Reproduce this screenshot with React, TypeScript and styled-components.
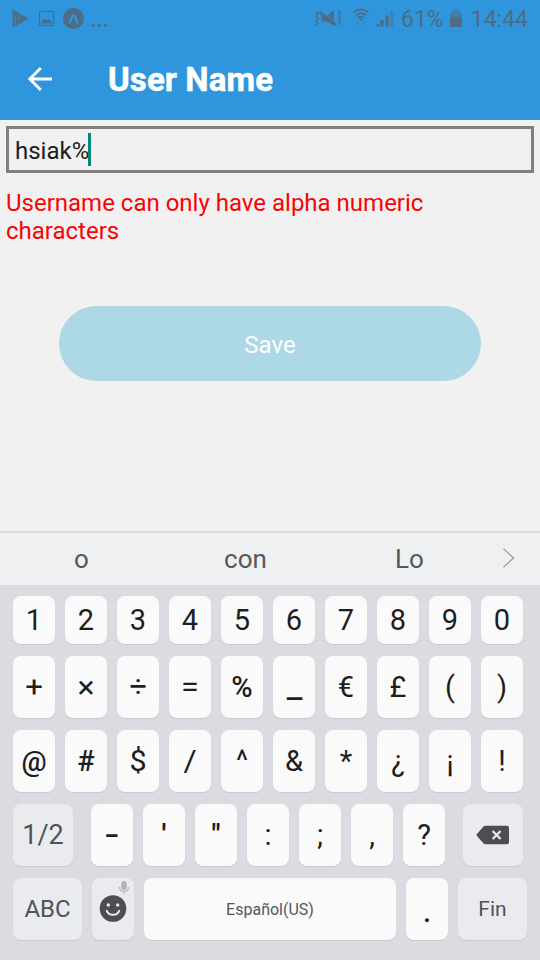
import React from "react";
import styled, { createGlobalStyle } from "styled-components";

const GlobalStyle = createGlobalStyle`
  * { box-sizing: border-box; }
  body { margin: 0; background: #f1f1f1; font-family: Roboto, sans-serif; }
`;

const Screen = styled.div`
  width: 540px;
  height: 960px;
  display: flex;
  flex-direction: column;
  background: #f1f1f1;
  overflow: hidden;
`;

const Header = styled.header`
  height: 120px;
  background: #2f95dc;
  display: flex;
  flex-direction: column;
`;

const StatusBar = styled.div`
  height: 38px;
  display: flex;
  align-items: center;
  justify-content: space-between;
  padding: 0 12px 0 11px;
  color: #4e6c84;
  font-size: 23px;
`;

const StatusGroup = styled.div`
  display: flex;
  align-items: center;
  height: 38px;
`;

const StatusText = styled.span<{ $ml: number }>`
  margin-left: ${(p) => p.$ml}px;
  line-height: 38px;
  padding-top: 1px;
`;

const BatterySlot = styled.span`
  display: flex;
  margin: 0 0 1px 5px;
`;

const TitleBar = styled.div`
  height: 82px;
  display: flex;
  align-items: center;
  padding-left: 26px;
`;

const Title = styled.h1`
  margin: 1px 0 0 54px;
  color: #fff;
  font-size: 33px;
  font-weight: 700;
  line-height: 40px;
  letter-spacing: 0.1px;
  -webkit-text-stroke: 0.5px #fff;
`;

const Form = styled.main`
  flex: 1;
  display: flex;
  flex-direction: column;
  padding: 6px 6px 0;
`;

const Field = styled.div`
  height: 47px;
  border: 3px solid #808080;
  display: flex;
  align-items: center;
  padding: 2px 6px 0;
  color: #1c1c1c;
  font-size: 24px;
`;

const Caret = styled.span`
  width: 3px;
  height: 33px;
  margin: 0 0 3px -1px;
  background: #0b8577;
`;

const ErrorText = styled.p`
  margin: 16px 0 0;
  color: #f80404;
  font-size: 24px;
  line-height: 28px;
`;

const SaveButton = styled.button`
  margin: 61px 53px 0;
  height: 75px;
  border: 0;
  border-radius: 38px;
  background: #add8e6;
  color: #fff;
  font: 400 24px Roboto, sans-serif;
  padding: 3px 0 0;
`;

const Suggestions = styled.div`
  height: 54px;
  border-top: 2px solid #d9dbdf;
  background: #eff0f2;
  display: grid;
  grid-template-columns: 163px 165px 163px 35px;
  align-items: center;
  justify-items: center;
  color: #55585b;
  font-size: 26px;
`;

const Suggestion = styled.span`
  line-height: 52px;
`;

const NextArrow = styled.svg`
  margin-bottom: 3px;
`;

const Keyboard = styled.section`
  height: 375px;
  background: #dbdce1;
  padding: 11px 13px 0;
  display: flex;
  flex-direction: column;
  gap: 12px;
`;

const KeyRow = styled.div<{ $h?: number }>`
  height: ${(p) => p.$h ?? 62}px;
  display: flex;
  gap: 10px;
`;

const Key = styled.div<{
  $w?: number;
  $size?: number;
  $weight?: number;
  $fn?: boolean;
  $mr?: number;
  $drop?: number;
}>`
  position: relative;
  flex: none;
  width: ${(p) => p.$w ?? 42}px;
  margin-right: ${(p) => p.$mr ?? 0}px;
  padding-top: ${(p) => p.$drop ?? 0}px;
  border-radius: 8px;
  background: ${(p) => (p.$fn ? "#eaebef" : "#fafafb")};
  box-shadow: 0 1px 1px rgba(120, 124, 136, 0.18);
  color: ${(p) => (p.$fn ? "#515356" : "#1e1e1e")};
  font-size: ${(p) => p.$size ?? 29}px;
  font-weight: ${(p) => p.$weight ?? 400};
  display: flex;
  align-items: center;
  justify-content: center;
`;

const Glyph = styled.span<{ $stretch?: number }>`
  transform: scaleX(${(p) => p.$stretch ?? 1});
`;

const SpaceLabel = styled.span`
  color: #55575a;
  font-size: 16px;
`;

const MicBadge = styled.svg`
  position: absolute;
  top: 3px;
  right: 4px;
`;

type KeySpec = { c: string; size?: number; weight?: number; stretch?: number };

const digits = ["1", "2", "3", "4", "5", "6", "7", "8", "9", "0"];

const math: KeySpec[] = [
  { c: "+", stretch: 1.08 },
  { c: "×", size: 32 },
  { c: "÷", stretch: 1.05 },
  { c: "=", stretch: 1.12 },
  { c: "%", weight: 500 },
  { c: "_", weight: 500, stretch: 1.2 },
  { c: "€" },
  { c: "£" },
  { c: "(" },
  { c: ")" },
];

const signs: KeySpec[] = [
  { c: "@", weight: 500, size: 28 },
  { c: "#", weight: 500 },
  { c: "$", stretch: 1.05 },
  { c: "/", stretch: 1.1 },
  { c: "^" },
  { c: "&" },
  { c: "*" },
  { c: "¿" },
  { c: "¡" },
  { c: "!" },
];

const punctuation: KeySpec[] = [
  { c: "-", weight: 500, stretch: 1.5 },
  { c: "'", weight: 700, size: 27 },
  { c: '"', weight: 700, size: 27 },
  { c: ":" },
  { c: ";" },
  { c: "," },
  { c: "?" },
];

const NotificationIcons = () => (
  <svg width="98" height="28" viewBox="11 5 98 28" fill="#4e6c84">
    <path d="M12.5 9.5 28.5 18.7 12.5 27.5z" />
    <path d="M15.2 15.5v9M18.2 14.5v7" stroke="#2f95dc" strokeWidth="0.8" />
    <rect x="39.5" y="11.5" width="14" height="14" fill="none" stroke="#4e6c84" strokeWidth="1.2" />
    <path d="M41.5 23.5v-2.5l2.5-2.5 2.3 2 2-1.8 3.7 3.3v1.5z" />
    <circle cx="73.5" cy="18.5" r="10.5" />
    <path
      d="M69.5 22.5c1.8-1.8 2.2-7.5 4-7.5s2.2 5.7 4 7.5"
      fill="none"
      stroke="#2f95dc"
      strokeWidth="2.3"
      strokeLinecap="round"
    />
    <circle cx="93.4" cy="25.4" r="1.5" />
    <circle cx="99.4" cy="25.4" r="1.5" />
    <circle cx="105.4" cy="25.4" r="1.5" />
  </svg>
);

const SignalIcons = () => (
  <svg width="80" height="28" viewBox="314 5 80 28" fill="#4e6c84">
    <path d="M321.5 15.5h6l6.500-5.500v15.500l-6.500-4h-6z" />
    <path d="M320.5 10.500 337 23" stroke="#2f95dc" strokeWidth="0.800" />
    <path d="M319.5 12 336 25" stroke="#4e6c84" strokeWidth="2.600" />
    <path
      d="M316 11.500l2 2.300-2 2.300 2 2.300-2 2.300 2 2.300-2 2.300M338.500 11l2 2.300-2 2.300 2 2.300-2 2.300 2 2.300-2 2.300"
      fill="none"
      stroke="#4e6c84"
      strokeWidth="1.300"
    />
    <path
      d="M353.500 12.300q7.500-6 15 0M355.800 15.300q5.200-4 10.400 0M358 18q3-2.200 6 0"
      fill="none"
      stroke="#4e6c84"
      strokeWidth="1.700"
    />
    <circle cx="361" cy="20" r="1.300" />
    <path d="M356.500 24l2.500-3v5zM365.500 24l-2.500-3v5z" opacity="0.400" />
    <path d="M376.500 24h3v2.500h-3zM380.500 20h3.200v6.500h-3.200zM385.500 15.500h3.200v11h-3.200z" />
    <path d="M390 11h3.500v15.500H390z" opacity="0.400" />
  </svg>
);

const BatteryIcon = () => (
  <svg width="14" height="20" viewBox="449 8 14 20" fill="#4e6c84">
    <path d="M452 8.500h8v3h2v4h-12v-4h2z" opacity="0.450" />
    <path d="M450 15.500h12v10.500h-12z" />
  </svg>
);

const BackArrow = () => (
  <svg width="28" height="28" viewBox="26 65 28 28" fill="none" stroke="#fff" strokeWidth="2.900">
    <path d="M52 79H30M40.800 68 29.800 79 40.800 90" />
  </svg>
);

const Smiley = () => (
  <svg width="28" height="28" viewBox="0 0 28 28">
    <circle cx="14" cy="13.500" r="13.300" fill="#4d4e50" />
    <circle cx="9.300" cy="10" r="1.700" fill="#eaebef" />
    <circle cx="18.700" cy="10" r="1.700" fill="#eaebef" />
    <path
      d="M7.800 15.800c2.200 5.300 10.200 5.300 12.400 0"
      fill="none"
      stroke="#eaebef"
      strokeWidth="2"
      strokeLinecap="round"
    />
  </svg>
);

const Backspace = () => (
  <svg width="34" height="20" viewBox="0 0 34 20">
    <path
      d="M9.500.7H31a2 2 0 0 1 2 2v14.600a2 2 0 0 1-2 2H9.500a3 3 0 0 1-2-.8L1.200 11.200a1.600 1.600 0 0 1 0-2.400L7.500 1.500a3 3 0 0 1 2-.8z"
      fill="#4d4e50"
    />
    <path d="M16.600 6l8 8M24.600 6l-8 8" stroke="#eaebef" strokeWidth="2.200" />
  </svg>
);

const SymbolKey = ({ spec, mr }: { spec: KeySpec; mr?: number }) => (
  <Key $size={spec.size} $weight={spec.weight} $mr={mr}>
    <Glyph $stretch={spec.stretch}>{spec.c}</Glyph>
  </Key>
);

export default function App() {
  return (
    <>
      <GlobalStyle />
      <Screen>
        <Header>
          <StatusBar>
            <StatusGroup>
              <NotificationIcons />
            </StatusGroup>
            <StatusGroup>
              <SignalIcons />
              <StatusText $ml={7}>61%</StatusText>
              <BatterySlot>
                <BatteryIcon />
              </BatterySlot>
              <StatusText $ml={8}>14:44</StatusText>
            </StatusGroup>
          </StatusBar>
          <TitleBar>
            <BackArrow />
            <Title>User Name</Title>
          </TitleBar>
        </Header>
        <Form>
          <Field>
            hsiak%
            <Caret />
          </Field>
          <ErrorText>Username can only have alpha numeric characters</ErrorText>
          <SaveButton>Save</SaveButton>
        </Form>
        <Suggestions>
          <Suggestion>o</Suggestion>
          <Suggestion>con</Suggestion>
          <Suggestion>Lo</Suggestion>
          <NextArrow width="14" height="22" viewBox="0 0 14 22" fill="none" stroke="#a4a6a9" strokeWidth="1.500">
            <path d="M1.500 1.800 11.500 11 1.500 20.200" />
          </NextArrow>
        </Suggestions>
        <Keyboard>
          <KeyRow $h={48}>
            {digits.map((c) => (
              <Key key={c}>{c}</Key>
            ))}
          </KeyRow>
          <KeyRow>
            {math.map((spec) => (
              <SymbolKey key={spec.c} spec={spec} />
            ))}
          </KeyRow>
          <KeyRow>
            {signs.map((spec) => (
              <SymbolKey key={spec.c} spec={spec} />
            ))}
          </KeyRow>
          <KeyRow>
            <Key $fn $w={60} $mr={8} $size={27}>
              1/2
            </Key>
            {punctuation.map((spec) => (
              <SymbolKey key={spec.c} spec={spec} mr={spec.c === "?" ? 8 : 0} />
            ))}
            <Key $fn $w={60}>
              <Backspace />
            </Key>
          </KeyRow>
          <KeyRow>
            <Key $fn $w={69} $size={24}>
              ABC
            </Key>
            <Key $fn>
              <Smiley />
              <MicBadge width="12" height="14" viewBox="0 0 12 14" fill="none" stroke="#b3b4b8" strokeWidth="1.200">
                <rect x="3.800" y="0.500" width="4.400" height="8" rx="2.200" fill="#b3b4b8" />
                <path d="M1.500 6c0 6 9 6 9 0M6 10.500V13" />
              </MicBadge>
            </Key>
            <Key $w={252}>
              <SpaceLabel>Español(US)</SpaceLabel>
            </Key>
            <Key $drop={5} $weight={500}>
              .
            </Key>
            <Key $fn $w={69} $size={21}>
              Fin
            </Key>
          </KeyRow>
        </Keyboard>
      </Screen>
    </>
  );
}
